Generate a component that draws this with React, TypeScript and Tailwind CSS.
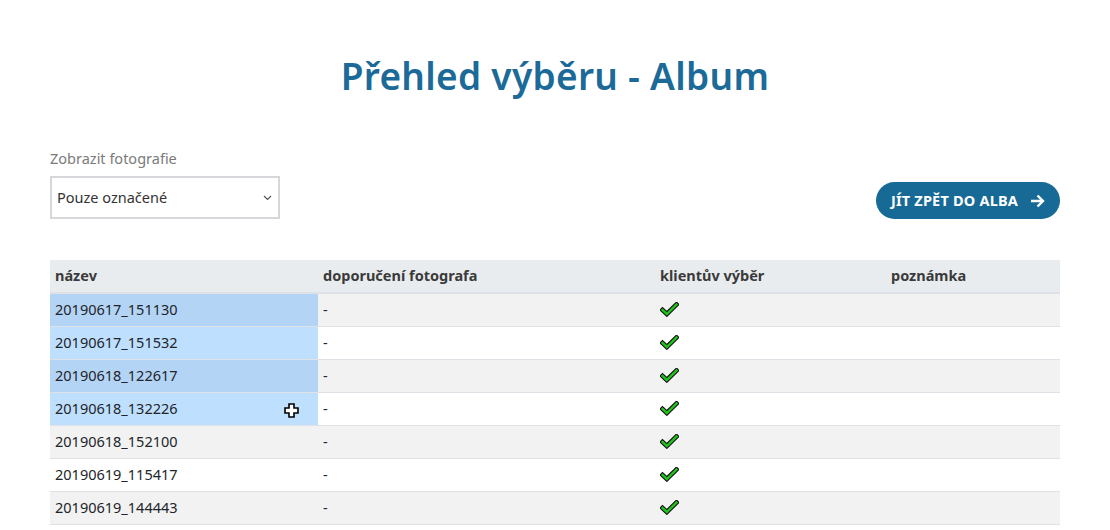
import React from "react";

const rows = [
  "20190617_151130",
  "20190617_151532",
  "20190618_122617",
  "20190618_132226",
  "20190618_152100",
  "20190619_115417",
  "20190619_144443",
];

function Check() {
  return (
    <svg width="19" height="15" viewBox="0 0 19 15">
      <path d="M2.5 8 L6.8 12 L16.5 2.5" fill="none" stroke="#111" strokeWidth="4.6" strokeLinecap="square" strokeLinejoin="miter" />
      <path d="M2.5 8 L6.8 12 L16.5 2.5" fill="none" stroke="#22c21c" strokeWidth="2.4" strokeLinecap="square" strokeLinejoin="miter" />
    </svg>
  );
}

function Cursor() {
  return (
    <svg width="15" height="15" viewBox="0 0 15 15" className="absolute left-[284px] top-[403px]">
      <path d="M5 1h5v4h4v5h-4v4H5v-4H1V5h4z" fill="#fff" stroke="#000" strokeWidth="1.6" />
    </svg>
  );
}

export default function App() {
  return (
    <div className="relative w-[1110px] h-[530px] bg-white overflow-hidden text-[#212529]" style={{ fontFamily: '"Noto Sans", "Open Sans", sans-serif' }}>
      <div className="px-[50px] pt-[48px]">
        <h1 className="text-center text-[37px] leading-[56px] font-semibold text-[#1b6a98] tracking-[0.3px]">Přehled výběru - Album</h1>
        <div className="mt-[44px] flex items-end justify-between">
          <div className="flex flex-col">
            <label className="text-[14.5px] leading-[20px] text-[#7a7a7a]">Zobrazit fotografie</label>
            <div className="mt-[8px] w-[230px] h-[43px] border-2 border-[#d5d7da] flex items-center justify-between pl-[5px] pr-[6px]">
              <span className="text-[14.5px] text-[#333]">Pouze označené</span>
              <svg width="9" height="6" viewBox="0 0 9 6"><path d="M1 1l3.5 3.5L8 1" fill="none" stroke="#555" strokeWidth="1.2" /></svg>
            </div>
          </div>
          <button className="mb-[0px] h-[37px] w-[184px] rounded-full bg-[#176a96] text-white font-bold text-[14.5px] flex items-center justify-center gap-[12px] tracking-[0.2px]">
            <span>JÍT ZPĚT DO ALBA</span>
            <svg width="15" height="14" viewBox="0 0 15 14"><path d="M1 7h12M7.5 1.5L13 7l-5.5 5.5" fill="none" stroke="#fff" strokeWidth="2.4" /></svg>
          </button>
        </div>
        <table className="mt-[41px] w-full border-collapse text-[14.5px]">
          <thead>
            <tr className="bg-[#e9ecef] h-[33px] border-b-2 border-[#dee2e6] text-[#3a3a3a]">
              <th className="w-[268px] text-left font-bold pl-[5px]">název</th>
              <th className="w-[337px] text-left font-bold pl-[5px]">doporučení fotografa</th>
              <th className="w-[231px] text-left font-bold pl-[5px]">klientův výběr</th>
              <th className="text-left font-bold pl-[5px]">poznámka</th>
            </tr>
          </thead>
          <tbody>
            {rows.map((r, i) => {
              const striped = i % 2 === 0;
              const hl = i < 4;
              return (
                <tr key={r} className={`h-[33px] border-b border-[#dee2e6] ${striped ? "bg-[#f2f2f2]" : "bg-white"}`}>
                  <td className={`pl-[5px] ${hl ? (striped ? "bg-[#b4d4f6]" : "bg-[#bfdfff]") : ""}`}>{r}</td>
                  <td className="pl-[5px]">-</td>
                  <td className="pl-[5px]"><div className="flex items-center"><Check /></div></td>
                  <td></td>
                </tr>
              );
            })}
          </tbody>
        </table>
      </div>
      <Cursor />
    </div>
  );
}
